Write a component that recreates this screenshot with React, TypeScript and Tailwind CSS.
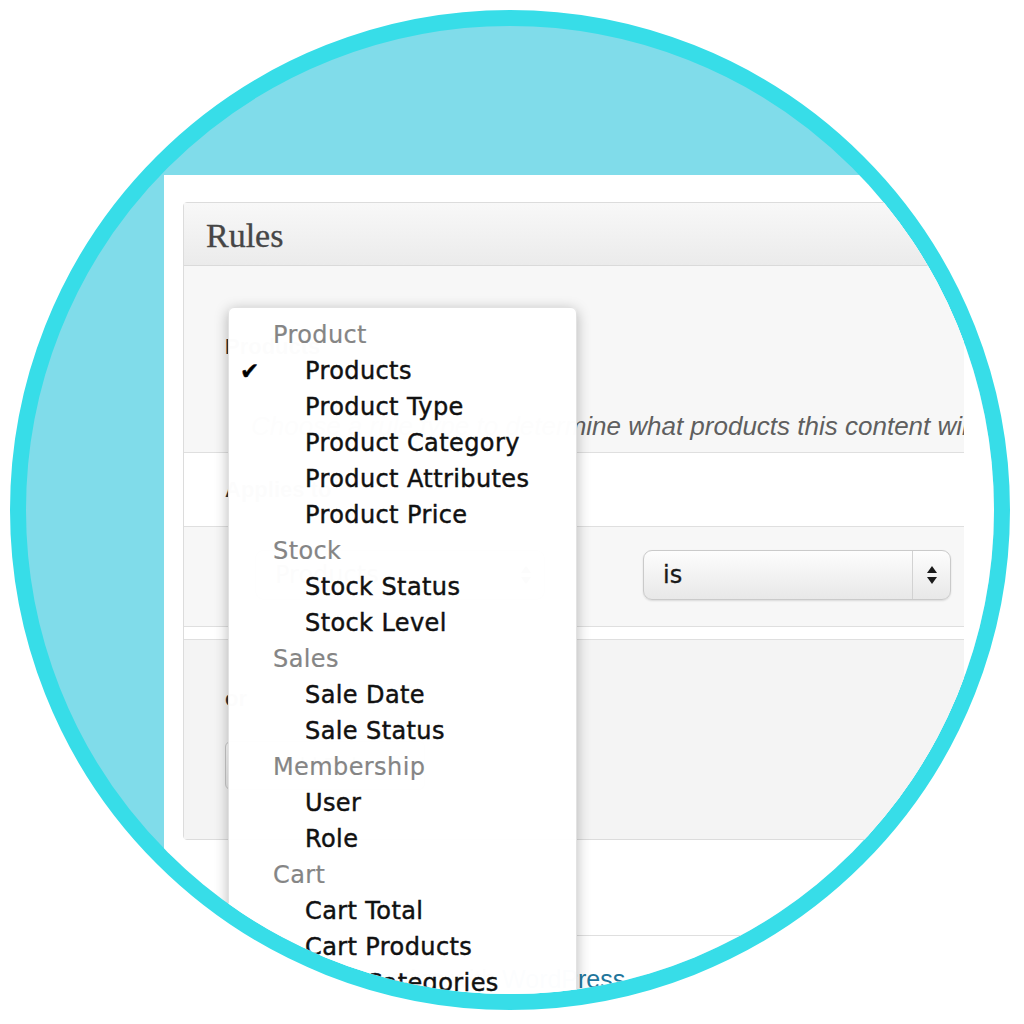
import React from "react";

type Row = { label: string; heading?: boolean; checked?: boolean };

const menu: Row[] = [
  { label: "Product", heading: true },
  { label: "Products", checked: true },
  { label: "Product Type" },
  { label: "Product Category" },
  { label: "Product Attributes" },
  { label: "Product Price" },
  { label: "Stock", heading: true },
  { label: "Stock Status" },
  { label: "Stock Level" },
  { label: "Sales", heading: true },
  { label: "Sale Date" },
  { label: "Sale Status" },
  { label: "Membership", heading: true },
  { label: "User" },
  { label: "Role" },
  { label: "Cart", heading: true },
  { label: "Cart Total" },
  { label: "Cart Products" },
  { label: "Cart Categories" },
  { label: "Cart Quantity" },
];

const UpDown = () => (
  <svg width="12" height="20" viewBox="0 0 12 20">
    <path d="M6 1 L11 8 L1 8 Z" fill="#1a1a1a" />
    <path d="M6 19 L11 12 L1 12 Z" fill="#1a1a1a" />
  </svg>
);

const Dropdown = () => (
  <div className="absolute left-[64px] top-[132px] w-[349px] h-[820px] bg-white/[0.985] rounded-[6px] border border-[#e2e2e2] shadow-[0_3px_14px_rgba(0,0,0,0.28)] pt-[9px] font-['DejaVu_Sans',sans-serif] text-[24px] leading-[36px] tracking-[0.4px]">
    {menu.map((row) =>
      row.heading ? (
        <div key={row.label} className="pl-[44px] text-[#858585] [-webkit-text-stroke:0.2px_#858585]">
          {row.label}
        </div>
      ) : (
        <div key={row.label} className="flex text-[#111] [-webkit-text-stroke:0.45px_#111]">
          <span className="w-[76px] pl-[11px] text-[23px] text-black">{row.checked ? "✔" : ""}</span>
          <span>{row.label}</span>
        </div>
      )
    )}
  </div>
);

export default function App() {
  return (
    <div className="w-[1024px] h-[1024px] bg-white p-[10px]">
      <div className="w-[1000px] h-[1000px] rounded-full border-[16px] border-[#37dde8] bg-[#80dcea] overflow-hidden">
        <div className="h-full flex flex-col pt-[149px] pl-[138px]">
          <div className="flex-1 bg-white">
            <div className="relative w-[800px] h-full overflow-hidden pl-[19px] pt-[27px]">
              {/* Rules panel */}
              <div className="w-[800px] border border-[#dcdcdc] rounded-[4px] bg-[#f7f7f7]">
                <div className="h-[63px] flex items-center pl-[22px] pt-[3px] border-b border-[#dadada] bg-linear-to-b from-[#f8f8f8] to-[#ebebeb] font-['Liberation_Serif',serif] text-[34px] text-[#464646] [-webkit-text-stroke:0.3px_#464646]">
                  Rules
                </div>
                <div className="h-[187px] border-b border-[#dfdfdf] pt-[66px] bg-[#f7f7f7]">
                  <div className="pl-[41px] h-[30px] leading-[30px] font-['Liberation_Sans',sans-serif] font-bold text-[22px] text-[#333]">
                    Products
                  </div>
                  <div className="mt-[49px] pl-[67px] h-[30px] leading-[30px] whitespace-nowrap font-['Liberation_Sans',sans-serif] italic text-[26px] text-[#5f5f5f]">
                    Choose a rule type to determine what products this content will apply to.
                  </div>
                </div>
                <div className="h-[74px] border-b border-[#dfdfdf] bg-white flex items-center pl-[41px] font-['Liberation_Sans',sans-serif] font-bold text-[22px] text-[#333]">
                  Applies to
                </div>
                <div className="h-[100px] border-b border-[#dfdfdf] bg-[#f7f7f7] pt-[23px] flex items-start pl-[71px] gap-[98px]">
                  <div className="w-[290px] h-[50px] rounded-[9px] border border-[#c8c8c8] bg-linear-to-b from-[#fdfdfd] to-[#e9e9e9] flex items-center justify-between pl-[19px] pr-[12px] font-['DejaVu_Sans',sans-serif] text-[24px] text-[#1a1a1a]">
                    <span>Products</span>
                    <UpDown />
                  </div>
                  <div className="w-[308px] h-[50px] rounded-[9px] border border-[#cacaca] bg-linear-to-b from-[#fdfdfd] to-[#e8e8e8] shadow-[0_1px_2px_rgba(0,0,0,0.12)] flex items-stretch font-['DejaVu_Sans',sans-serif] text-[24px] text-[#1a1a1a]">
                    <span className="flex-1 flex items-center pl-[19px] [-webkit-text-stroke:0.3px_#1a1a1a]">is</span>
                    <span className="w-[38px] border-l border-[#d2d2d2] flex items-center justify-center">
                      <UpDown />
                    </span>
                  </div>
                </div>
                <div className="h-[13px] border-b border-[#dfdfdf] bg-white" />
                <div className="h-[199px] bg-[#f4f4f4] pt-[44px] pl-[41px] font-['Liberation_Sans',sans-serif] text-[22px] text-[#333]">
                  <div className="h-[30px] leading-[30px] font-bold">or</div>
                  <div className="mt-[27px] w-[200px] h-[49px] rounded-[6px] border border-[#c8c8c8] bg-linear-to-b from-white to-[#ededed] flex items-center pl-[52px] text-[#555]">
                    Add Rule
                  </div>
                </div>
              </div>
              {/* footer */}
              <div className="mt-[95px] -ml-[19px] border-t border-[#dfdfdf] pt-[28px] pl-[31px] font-['Liberation_Sans',sans-serif] text-[25px] leading-[30px] whitespace-nowrap">
                <span className="text-[#666]">Thank you for creating with </span>
                <span className="text-[#21759b]">WordPress</span>
              </div>
              <Dropdown />
            </div>
          </div>
        </div>
      </div>
    </div>
  );
}
